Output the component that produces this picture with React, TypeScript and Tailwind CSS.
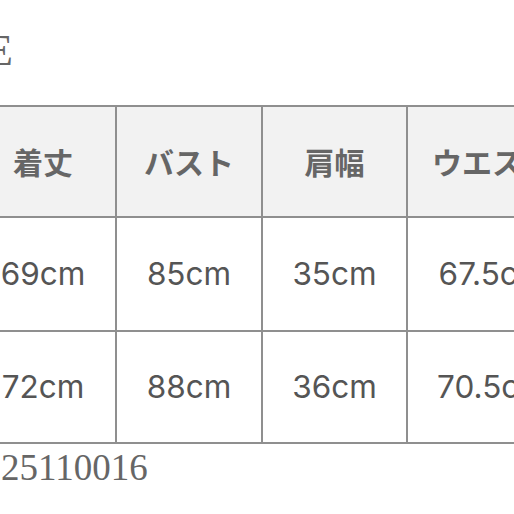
const headers = ['着丈', 'バスト', '肩幅', 'ウエスト']
const rows = [
  ['69cm', '85cm', '35cm', '67.5cm'],
  ['72cm', '88cm', '36cm', '70.5cm'],
]
const widths = ['w-[146px]', 'w-[146px]', 'w-[145px]', 'w-[170px]']

export default function App() {
  return (
    <div className="w-[514px] h-[514px] overflow-hidden bg-white">
      <div className="pt-[28px]">
        <p className="ml-[-82px] text-[45px] leading-none text-[#666] whitespace-nowrap font-['Liberation_Serif',serif]">
          SIZE
        </p>

        <div className="mt-[32px] ml-[-29px] flex flex-col border-t-2 border-[#8f8f8f] w-max">
          <div className="flex bg-[#f2f2f2]">
            {headers.map((h, i) => (
              <div
                key={h}
                className={`${widths[i]} shrink-0 h-[111px] flex items-center justify-center border-r-2 border-b-2 border-[#8f8f8f] text-[30px] font-bold text-[#666] whitespace-nowrap font-['Noto_Sans_CJK_JP',sans-serif]`}
              >
                {h}
              </div>
            ))}
          </div>
          {rows.map((row, r) => (
            <div key={r} className="flex bg-white">
              {row.map((v, i) => (
                <div
                  key={i}
                  className={`${widths[i]} shrink-0 ${r === 0 ? 'h-[114px]' : 'h-[112px]'} flex items-center justify-center border-r-2 border-b-2 border-[#8f8f8f] text-[31.5px] text-[#555] whitespace-nowrap font-['Inter',sans-serif]`}
                >
                  {v}
                </div>
              ))}
            </div>
          ))}
        </div>

        <p className="mt-[5px] ml-[1px] text-[37px] leading-none text-[#666] whitespace-nowrap font-['Liberation_Serif',serif]">
          25110016
        </p>
      </div>
    </div>
  )
}
